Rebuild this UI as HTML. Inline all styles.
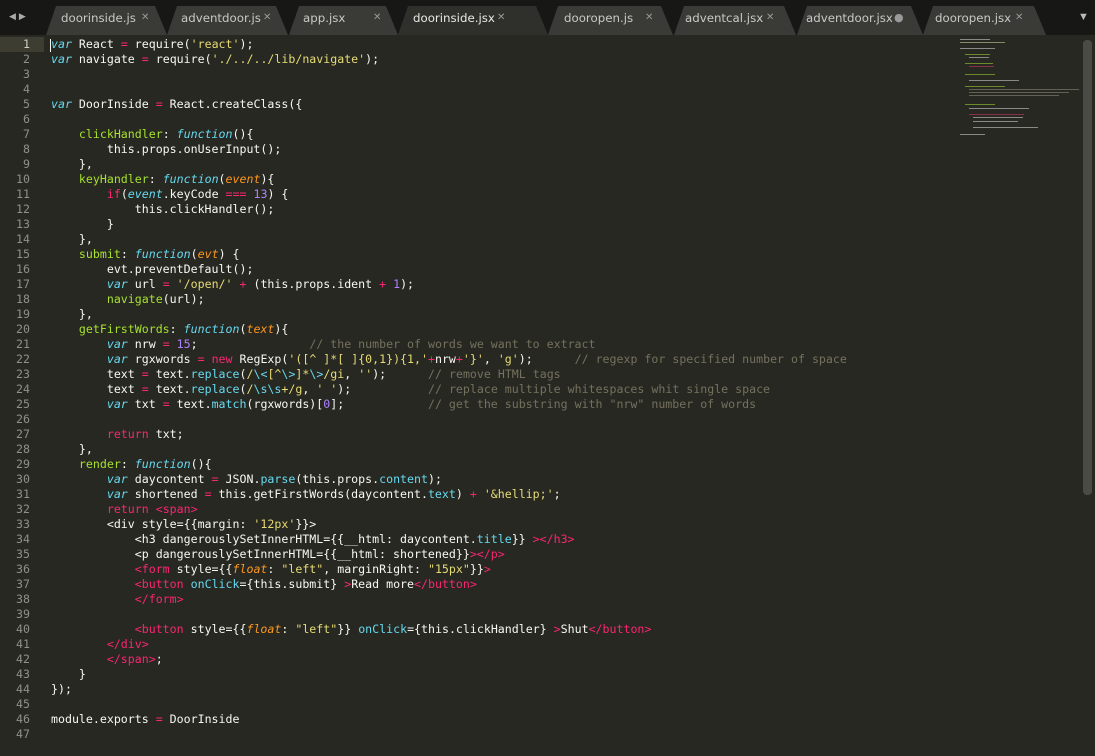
<!DOCTYPE html>
<html><head><meta charset="utf-8"><style>
*{margin:0;padding:0;box-sizing:border-box}
html,body{width:1095px;height:756px;overflow:hidden;background:#272822}
#bar{position:absolute;left:0;top:0;width:1095px;height:35px;background:#171715}
.tab{position:absolute;top:6px;height:29px;background:#3a3a37;clip-path:polygon(0 100%,10px 0,calc(100% - 12px) 0,100% 100%)}
.tab.act{background:#2f302b}
.tl{position:absolute;top:11px;font:11.8px "DejaVu Sans","Liberation Sans",sans-serif;color:#c8c8c4}
.tx{position:absolute;top:12px;font:10px "DejaVu Sans",sans-serif;color:#999}
#arrows{position:absolute;left:9px;top:11px;color:#aaa;font:9px sans-serif;letter-spacing:3px}
#dd{position:absolute;left:1078px;top:11px;color:#bbb;font:11px sans-serif}
#gut{position:absolute;left:0;top:37px;width:44px;font:11.6px/15px "DejaVu Sans Mono",monospace;color:#8f908a;text-align:right;white-space:pre}
#gut div{padding-right:14px}
#gut div.cur{background:#3e3d32;color:#d0d0c8}
#code{position:absolute;left:51px;top:37px;font:11.6px/15px "DejaVu Sans Mono",monospace;color:#f8f8f2;white-space:pre}
.k{color:#f92672}.s{color:#66d9ef;font-style:italic}.f{color:#a6e22e}.t{color:#e6db74}.n{color:#ae81ff}.c{color:#75715e}.p{color:#fd971f;font-style:italic}.b{color:#66d9ef}
#cursor{position:absolute;left:50px;top:39px;width:1px;height:13px;background:#f8f8f0}
#mini{position:absolute;left:955px;top:36px;width:122px;height:100px}
#mini div{position:absolute;height:1px;opacity:.6}
#sb{position:absolute;left:1083px;top:40px;width:9px;height:455px;background:#4a4a46;border-radius:4px}
</style></head><body>
<div id="bar">
<div id="arrows">◀▶</div>
<div class="tab" style="left:46px;width:121px"></div>
<div class="tab" style="left:167px;width:121px"></div>
<div class="tab" style="left:289px;width:109px"></div>
<div class="tab act" style="left:398px;width:150px"></div>
<div class="tab" style="left:548px;width:125px"></div>
<div class="tab" style="left:674px;width:122px"></div>
<div class="tab" style="left:797px;width:126px"></div>
<div class="tab" style="left:923px;width:123px"></div>
<span class="tl" style="left:61px">doorinside.js</span><span class="tx" style="left:141px">✕</span>
<span class="tl" style="left:181px">adventdoor.js</span><span class="tx" style="left:263px">✕</span>
<span class="tl" style="left:303px">app.jsx</span><span class="tx" style="left:373px">✕</span>
<span class="tl" style="left:413px;color:#e8e8e4">doorinside.jsx</span><span class="tx" style="left:497px">✕</span>
<span class="tl" style="left:564px">dooropen.js</span><span class="tx" style="left:645px">✕</span>
<span class="tl" style="left:685px">adventcal.jsx</span><span class="tx" style="left:766px">✕</span>
<span class="tl" style="left:806px">adventdoor.jsx</span><span class="tx" style="left:894px;font-size:11px;top:11px">●</span>
<span class="tl" style="left:935px">dooropen.jsx</span><span class="tx" style="left:1015px">✕</span>
<div id="dd">▼</div>
</div>
<div id="gut"><div class="cur">1</div><div>2</div><div>3</div><div>4</div><div>5</div><div>6</div><div>7</div><div>8</div><div>9</div><div>10</div><div>11</div><div>12</div><div>13</div><div>14</div><div>15</div><div>16</div><div>17</div><div>18</div><div>19</div><div>20</div><div>21</div><div>22</div><div>23</div><div>24</div><div>25</div><div>26</div><div>27</div><div>28</div><div>29</div><div>30</div><div>31</div><div>32</div><div>33</div><div>34</div><div>35</div><div>36</div><div>37</div><div>38</div><div>39</div><div>40</div><div>41</div><div>42</div><div>43</div><div>44</div><div>45</div><div>46</div><div>47</div></div>
<div id="cursor"></div>
<div id="code"><span class="s">var</span> React <span class="k">=</span> require(<span class="t">'react'</span>);
<span class="s">var</span> navigate <span class="k">=</span> require(<span class="t">'./../../lib/navigate'</span>);


<span class="s">var</span> DoorInside <span class="k">=</span> React.createClass({

    <span class="f">clickHandler</span>: <span class="s">function</span>(){
        this.props.onUserInput();
    },
    <span class="f">keyHandler</span>: <span class="s">function</span>(<span class="p">event</span>){
        <span class="k">if</span>(<span class="s">event</span>.keyCode <span class="k">===</span> <span class="n">13</span>) {
            this.clickHandler();
        }
    },
    <span class="f">submit</span>: <span class="s">function</span>(<span class="p">evt</span>) {
        evt.preventDefault();
        <span class="s">var</span> url <span class="k">=</span> <span class="t">'/open/'</span> <span class="k">+</span> (this.props.ident <span class="k">+</span> <span class="n">1</span>);
        <span class="f">navigate</span>(url);
    },
    <span class="f">getFirstWords</span>: <span class="s">function</span>(<span class="p">text</span>){
        <span class="s">var</span> nrw <span class="k">=</span> <span class="n">15</span>;                <span class="c">// the number of words we want to extract</span>
        <span class="s">var</span> rgxwords <span class="k">=</span> <span class="k">new</span> RegExp(<span class="t">'([^ ]*[ ]{0,1}){1,'</span><span class="k">+</span>nrw<span class="k">+</span><span class="t">'}'</span>, <span class="t">'g'</span>);      <span class="c">// regexp for specified number of space</span>
        text <span class="k">=</span> text.<span class="b">replace</span>(<span class="t">/</span><span class="b">\&lt;</span><span class="t">[^</span><span class="b">\&gt;</span><span class="t">]*</span><span class="b">\&gt;</span><span class="t">/gi</span>, <span class="t">''</span>);      <span class="c">// remove HTML tags</span>
        text <span class="k">=</span> text.<span class="b">replace</span>(<span class="t">/</span><span class="b">\s\s</span><span class="t">+/g</span>, <span class="t">' '</span>);           <span class="c">// replace multiple whitespaces whit single space</span>
        <span class="s">var</span> txt <span class="k">=</span> text.<span class="b">match</span>(rgxwords)[<span class="n">0</span>];            <span class="c">// get the substring with "nrw" number of words</span>

        <span class="k">return</span> txt;
    },
    <span class="f">render</span>: <span class="s">function</span>(){
        <span class="s">var</span> daycontent <span class="k">=</span> JSON.<span class="b">parse</span>(this.props.<span class="b">content</span>);
        <span class="s">var</span> shortened <span class="k">=</span> this.getFirstWords(daycontent.<span class="b">text</span>) <span class="k">+</span> <span class="t">'&amp;hellip;'</span>;
        <span class="k">return</span> <span class="k">&lt;span&gt;</span>
        &lt;div style={{margin: <span class="t">'12px'</span>}}&gt;
            &lt;h3 dangerouslySetInnerHTML={{__html: daycontent.<span class="b">title</span>}} <span class="k">&gt;&lt;/h3&gt;</span>
            &lt;p dangerouslySetInnerHTML={{__html: shortened}}<span class="k">&gt;&lt;/p&gt;</span>
            <span class="k">&lt;form</span> style={{<span class="p">float</span>: <span class="t">"left"</span>, marginRight: <span class="t">"15px"</span>}}<span class="k">&gt;</span>
            <span class="k">&lt;button</span> <span class="b">onClick</span>={this.submit} <span class="k">&gt;</span>Read more<span class="k">&lt;/button&gt;</span>
            <span class="k">&lt;/form&gt;</span>

            <span class="k">&lt;button</span> style={{<span class="p">float</span>: <span class="t">"left"</span>}} <span class="b">onClick</span>={this.clickHandler} <span class="k">&gt;</span>Shut<span class="k">&lt;/button&gt;</span>
        <span class="k">&lt;/div&gt;</span>
        <span class="k">&lt;/span&gt;</span>;
    }
});

module.exports <span class="k">=</span> DoorInside
</div>
<div id="mini">
<div style="left:5px;top:3px;width:30px;background:#ccc"></div>
<div style="left:5px;top:6px;width:45px;background:#cc9"></div>
<div style="left:5px;top:12px;width:35px;background:#ccc"></div>
<div style="left:10px;top:18px;width:25px;background:#9c3"></div>
<div style="left:14px;top:21px;width:20px;background:#ccc"></div>
<div style="left:10px;top:27px;width:28px;background:#9c3"></div>
<div style="left:14px;top:30px;width:25px;background:#c36"></div>
<div style="left:10px;top:38px;width:30px;background:#9c3"></div>
<div style="left:14px;top:44px;width:50px;background:#ccc"></div>
<div style="left:10px;top:50px;width:40px;background:#9c3"></div>
<div style="left:14px;top:53px;width:110px;background:#887"></div>
<div style="left:14px;top:56px;width:100px;background:#887"></div>
<div style="left:14px;top:59px;width:90px;background:#887"></div>
<div style="left:10px;top:68px;width:30px;background:#9c3"></div>
<div style="left:14px;top:72px;width:60px;background:#ccc"></div>
<div style="left:14px;top:78px;width:55px;background:#c36"></div>
<div style="left:18px;top:81px;width:50px;background:#ccc"></div>
<div style="left:18px;top:85px;width:45px;background:#ccc"></div>
<div style="left:18px;top:91px;width:65px;background:#ccc"></div>
<div style="left:5px;top:98px;width:25px;background:#ccc"></div>
</div>
<div id="sb"></div>
</body></html>
